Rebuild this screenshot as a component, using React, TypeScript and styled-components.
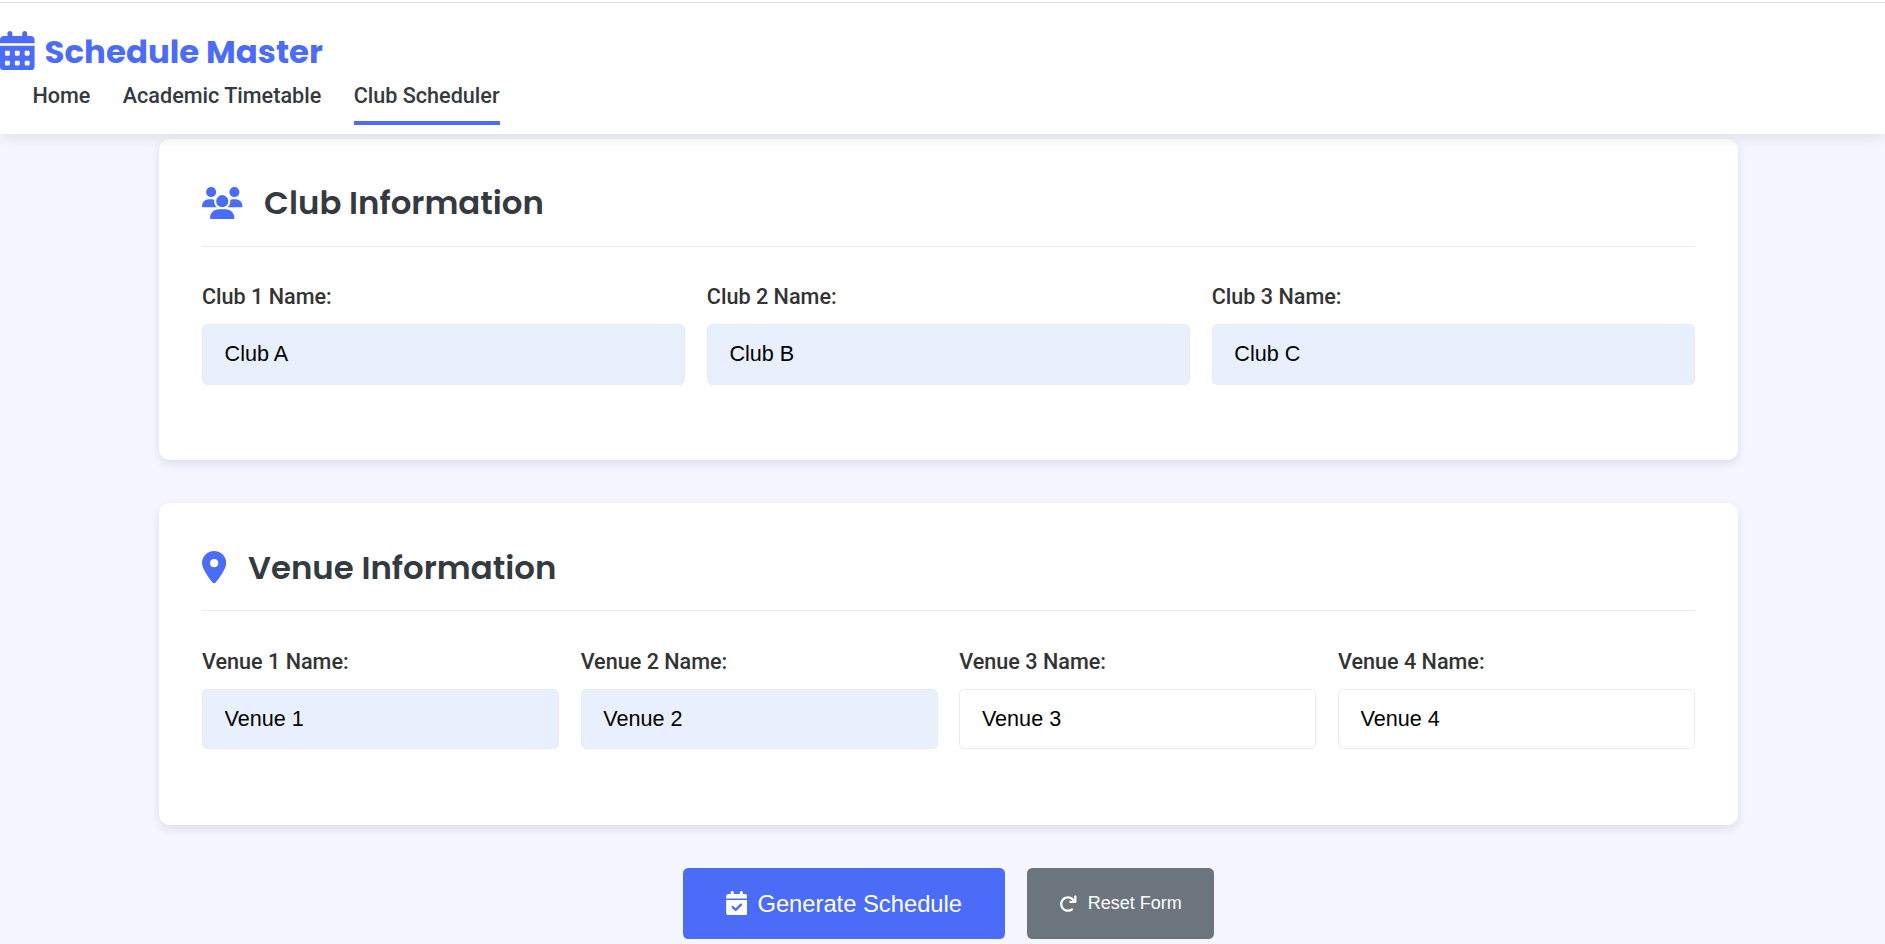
import React from "react";
import styled, { createGlobalStyle } from "styled-components";
import {
  FaCalendarCheck,
  FaCalendarDays,
  FaLocationDot,
  FaUsers,
} from "react-icons/fa6";

const GlobalStyle = createGlobalStyle`
  * { box-sizing: border-box; margin: 0; padding: 0; }
  body {
    background: #f4f7ff;
    font-family: Roboto, "Liberation Sans", sans-serif;
    color: #333;
    overflow: hidden;
  }
`;

const primary = "#4a6cf7";
const heading = "Poppins, Inter, sans-serif";

const Page = styled.div`
  height: 944px;
  overflow: hidden;
`;

const Header = styled.header`
  position: relative;
  z-index: 2;
  height: 134px;
  padding-top: 28px;
  background: #fff;
  box-shadow: 0 3px 14px rgba(0, 0, 0, 0.1);
`;

const TopRule = styled.div`
  position: absolute;
  top: 2px;
  left: 0;
  right: 0;
  height: 1px;
  background: #e0e0e0;
`;

const Logo = styled.div`
  display: flex;
  align-items: center;
  height: 47px;
  gap: 10px;
  color: ${primary};
  font: 700 32.4px/47px ${heading};

  svg {
    width: 34.6px;
    height: 39.5px;
    margin-bottom: 2px;
  }
`;

const Nav = styled.nav`
  display: flex;
  gap: 32.4px;
  padding-left: 32.4px;
`;

const NavLink = styled.a<{ $active?: boolean }>`
  height: 50px;
  padding-top: 5px;
  font-size: 21.6px;
  font-weight: 500;
  line-height: 32px;
  color: #343a40;
  border-bottom: 4px solid ${(p) => (p.$active ? primary : "transparent")};
`;

const Main = styled.main`
  width: 1579px;
  margin: 4.7px 0 0 159px;
`;

const Card = styled.section`
  height: 321.4px;
  margin-bottom: 43.2px;
  padding: 43.3px 43px;
  background: #fff;
  border-radius: 10.8px;
  box-shadow: 0 4px 11px rgba(0, 0, 0, 0.1);
`;

const CardTitle = styled.h2`
  display: flex;
  align-items: center;
  gap: 21.6px;
  height: 64.7px;
  padding-bottom: 21.5px;
  border-bottom: 1px solid #e9ecef;
  font: 600 32.4px/40px ${heading};
  color: #343a40;
`;

const TitleIcon = styled.span<{ $width: number }>`
  display: flex;
  width: ${(p) => p.$width}px;
  height: 32.4px;
  color: ${primary};

  svg {
    width: 100%;
    height: 100%;
  }
`;

const Fields = styled.div<{ $columns: number }>`
  display: grid;
  grid-template-columns: repeat(${(p) => p.$columns}, 1fr);
  gap: 21.6px;
  margin-top: 33.3px;
`;

const Label = styled.label`
  display: block;
  font-size: 21.6px;
  font-weight: 500;
  line-height: 34px;
`;

const Input = styled.input<{ $filled?: boolean }>`
  display: block;
  width: 100%;
  height: 60.7px;
  margin-top: 10px;
  padding: 0 21.6px;
  border: 1px solid #e9ecef;
  border-radius: 5.4px;
  background: ${(p) => (p.$filled ? "#e8f0fe" : "#fff")};
  color: #000;
  font: 21.6px "Liberation Sans", Arial, sans-serif;
`;

const Actions = styled.div`
  display: flex;
  justify-content: center;
  gap: 21.6px;
`;

const Button = styled.button<{ $secondary?: boolean }>`
  display: flex;
  align-items: center;
  justify-content: center;
  gap: ${(p) => (p.$secondary ? 10.3 : 10)}px;
  width: ${(p) => (p.$secondary ? 187 : 322)}px;
  height: 71px;
  padding: ${(p) => (p.$secondary ? "0 0 0 0.5px" : "1px 0.5px 0 0")};
  border: 0;
  border-radius: 5.4px;
  background: ${(p) => (p.$secondary ? "#6c757d" : primary)};
  color: #fff;
  font: ${(p) => (p.$secondary ? 18 : 23.76)}px "Liberation Sans", Arial, sans-serif;

  svg {
    width: ${(p) => (p.$secondary ? 18 : 21.6)}px;
    height: ${(p) => (p.$secondary ? 18 : 24.3)}px;
    margin: ${(p) => (p.$secondary ? "1.5px 0 0" : "0 0 1.5px")};
  }
`;

const ResetIcon = () => (
  <svg viewBox="0 0 512 512" fill="currentColor" aria-hidden="true">
    <path d="M496 48V192c0 17.69-14.31 32-32 32H320c-17.69 0-32-14.31-32-32s14.31-32 32-32h63.39c-29.97-39.7-77.25-63.78-127.6-63.78C167.7 96.22 96 167.9 96 256s71.69 159.8 159.8 159.8c34.88 0 68.03-11.03 95.88-31.94c14.22-10.53 34.22-7.75 44.81 6.375c10.59 14.16 7.75 34.22-6.375 44.81c-39.03 29.28-85.36 44.86-134.2 44.86C132.5 479.9 32 379.4 32 256s100.5-223.9 223.9-223.9c69.15 0 134 32.47 176.1 86.12V48c0-17.69 14.31-32 32-32S496 30.31 496 48z" />
  </svg>
);

interface Field {
  label: string;
  value: string;
  filled?: boolean;
}

const clubs: Field[] = [
  { label: "Club 1 Name:", value: "Club A", filled: true },
  { label: "Club 2 Name:", value: "Club B", filled: true },
  { label: "Club 3 Name:", value: "Club C", filled: true },
];

const venues: Field[] = [
  { label: "Venue 1 Name:", value: "Venue 1", filled: true },
  { label: "Venue 2 Name:", value: "Venue 2", filled: true },
  { label: "Venue 3 Name:", value: "Venue 3" },
  { label: "Venue 4 Name:", value: "Venue 4" },
];

const FieldRow = ({ fields }: { fields: Field[] }) => (
  <Fields $columns={fields.length}>
    {fields.map((f) => (
      <div key={f.label}>
        <Label>{f.label}</Label>
        <Input defaultValue={f.value} $filled={f.filled} />
      </div>
    ))}
  </Fields>
);

export default function App() {
  return (
    <Page>
      <GlobalStyle />
      <Header>
        <TopRule />
        <Logo>
          <FaCalendarDays />
          <span>Schedule Master</span>
        </Logo>
        <Nav>
          <NavLink>Home</NavLink>
          <NavLink>Academic Timetable</NavLink>
          <NavLink $active>Club Scheduler</NavLink>
        </Nav>
      </Header>
      <Main>
        <Card>
          <CardTitle>
            <TitleIcon $width={40.5}>
              <FaUsers />
            </TitleIcon>
            <span>Club Information</span>
          </CardTitle>
          <FieldRow fields={clubs} />
        </Card>
        <Card>
          <CardTitle>
            <TitleIcon $width={24.3}>
              <FaLocationDot />
            </TitleIcon>
            <span>Venue Information</span>
          </CardTitle>
          <FieldRow fields={venues} />
        </Card>
        <Actions>
          <Button>
            <FaCalendarCheck />
            <span>Generate Schedule</span>
          </Button>
          <Button $secondary>
            <ResetIcon />
            <span>Reset Form</span>
          </Button>
        </Actions>
      </Main>
    </Page>
  );
}
